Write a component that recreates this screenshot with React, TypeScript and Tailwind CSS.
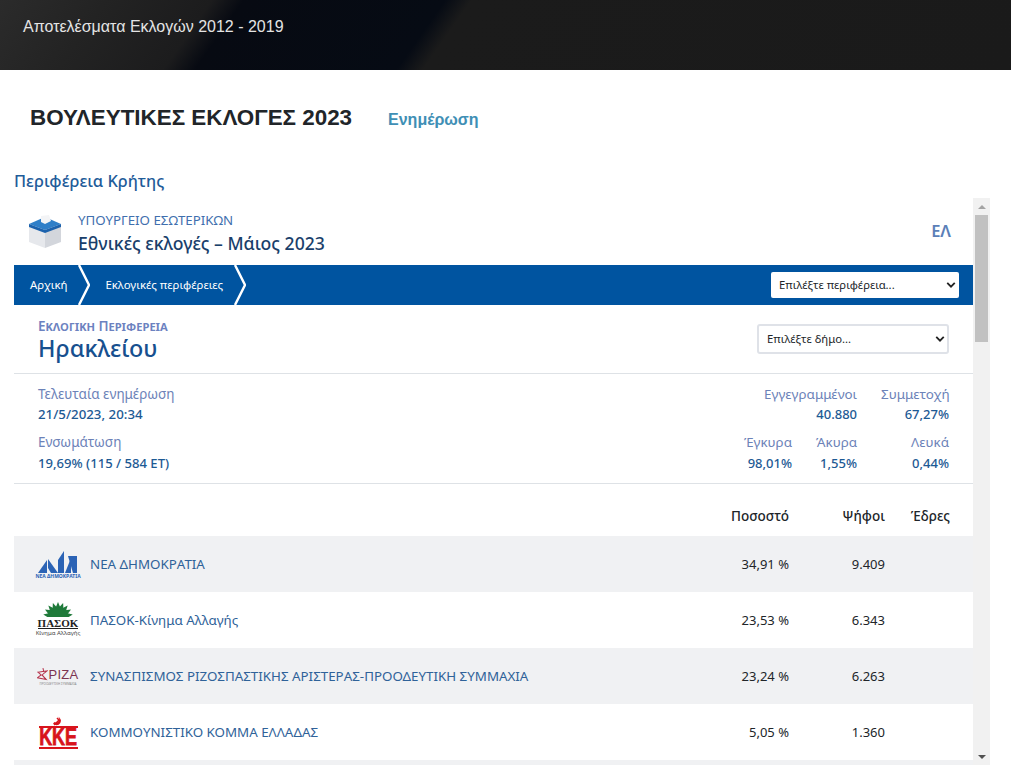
import React from 'react';

const font = "font-['Noto_Sans','Open_Sans',sans-serif]";

interface Party {
  name: string;
  percent: string;
  votes: string;
  logo: React.ReactNode;
}

const NdLogo = () => (
  <div className="flex w-[40px] flex-col items-center">
    <svg viewBox="0 0 40 23" className="h-[23px] w-[40px]">
      <path d="M0 23 L9 10 L9 23 Z" fill="#2b63b5" />
      <path d="M10 9 L20 23 L13 23 L10 18 Z" fill="#2b63b5" />
      <path d="M20 23 L20 10 L26 1 L26 23 Z" fill="#2b63b5" />
      <path d="M27 23 L33 8 L33 23 Z" fill="#2b63b5" />
      <path d="M30 6 L39 6 L39 23 L35 23 Z" fill="#2b63b5" />
    </svg>
    <span className="text-[5px] leading-[6px] font-bold whitespace-nowrap text-[#2b63b5]">ΝΕΑ ΔΗΜΟΚΡΑΤΙΑ</span>
  </div>
);

const sunRays = [-80, -60, -40, -20, 0, 20, 40, 60, 80];

const PasokLogo = () => (
  <div className="flex w-[40px] flex-col items-center">
    <svg viewBox="0 0 32 15" className="h-[15px] w-[32px]">
      <path d="M6 15 A10 10 0 0 1 26 15 Z" fill="#1f7a3a" />
      {sunRays.map((deg) => (
        <path key={deg} d="M13.5 6 L16 0 L18.5 6 Z" fill="#1f7a3a" transform={`rotate(${deg} 16 15)`} />
      ))}
    </svg>
    <span className="mt-[1px] border-b border-[#222] font-['Liberation_Serif',serif] text-[11px] leading-[10px] font-bold text-[#222]">
      ΠΑΣΟΚ
    </span>
    <span className="text-[6px] leading-[9px] whitespace-nowrap text-[#444]">Κίνημα Αλλαγής</span>
  </div>
);

const SyrizaLogo = () => (
  <div className="flex w-[40px] flex-col items-center">
    <div className="flex items-end">
      <svg viewBox="0 0 12 15" className="h-[15px] w-[11px]">
        <path d="M1 5 L11 3.5 L5.5 8 L10 13 L0.5 11 L4.5 8 Z" fill="none" stroke="#b5324a" strokeWidth="1.1" />
        <path d="M6.5 0.5 L7.5 5" stroke="#b5324a" strokeWidth="1.1" />
      </svg>
      <span className="font-['Liberation_Sans',sans-serif] text-[13px] leading-[14px] tracking-[0.3px] text-[#7c3350]">
        PIZA
      </span>
    </div>
    <span className="text-[3px] leading-[4px] whitespace-nowrap text-[#888]">ΠΡΟΟΔΕΥΤΙΚΗ ΣΥΜΜΑΧΙΑ</span>
  </div>
);

const KkeLogo = () => (
  <div className="flex w-[40px] flex-col items-center">
    <svg viewBox="0 0 14 10" className="h-[10px] w-[14px]">
      <path d="M6.5 0.5 A4.4 4.4 0 1 1 2 7.5 L3.6 6 A2.6 2.6 0 1 0 6.5 0.5 Z" fill="#d8141c" />
      <path d="M3 9 L8 4" stroke="#d8141c" strokeWidth="1.3" />
      <path d="M6 2 L9 5" stroke="#d8141c" strokeWidth="1.6" />
    </svg>
    <div className="flex h-[23px] w-[39px] items-center justify-center border-y-2 border-[#d8141c]">
      <span className="origin-center scale-y-[1.35] font-['Liberation_Sans',sans-serif] text-[18px] leading-[13px] font-bold tracking-[-0.2px] text-[#d8141c] [-webkit-text-stroke:0.6px_#d8141c]">
        KKE
      </span>
    </div>
  </div>
);

const parties: Party[] = [
  { name: 'ΝΕΑ ΔΗΜΟΚΡΑΤΙΑ', percent: '34,91 %', votes: '9.409', logo: <NdLogo /> },
  { name: 'ΠΑΣΟΚ-Κίνημα Αλλαγής', percent: '23,53 %', votes: '6.343', logo: <PasokLogo /> },
  {
    name: 'ΣΥΝΑΣΠΙΣΜΟΣ ΡΙΖΟΣΠΑΣΤΙΚΗΣ ΑΡΙΣΤΕΡΑΣ-ΠΡΟΟΔΕΥΤΙΚΗ ΣΥΜΜΑΧΙΑ',
    percent: '23,24 %',
    votes: '6.263',
    logo: <SyrizaLogo />,
  },
  { name: 'ΚΟΜΜΟΥΝΙΣΤΙΚΟ ΚΟΜΜΑ ΕΛΛΑΔΑΣ', percent: '5,05 %', votes: '1.360', logo: <KkeLogo /> },
];

const BallotBox = () => (
  <svg viewBox="0 0 34 34" className="h-[34px] w-[34px]">
    <path d="M1 9 L17 15 L17 33 L1 27 Z" fill="#e6e8ec" />
    <path d="M33 9 L17 15 L17 33 L33 27 Z" fill="#d3d6dc" />
    <path d="M1 9 L17 2 L33 9 L17 15 Z" fill="#2f7fc8" />
    <path d="M1 9 L17 15 L33 9 L33 12 L17 18 L1 12 Z" fill="#1c62ad" />
    <path d="M13 1 L21 0 L23 6 L17 9 L13 7 Z" fill="#f3f4f6" />
  </svg>
);

const Chevron = () => (
  <svg viewBox="0 0 12 40" className="h-[40px] w-[12px] shrink-0">
    <path d="M1 0 L11 20 L1 40" fill="none" stroke="#fff" strokeWidth="2.4" />
  </svg>
);

const SelectMock = ({ label, className }: { label: string; className: string }) => (
  <div className={`flex items-center justify-between bg-white text-[11.3px] text-[#212529] ${className}`}>
    <span>{label}</span>
    <svg viewBox="0 0 12 8" className="h-[8px] w-[10px]">
      <path d="M1.5 1.5 L6 6 L10.5 1.5" fill="none" stroke="#222" strokeWidth="2.2" />
    </svg>
  </div>
);

const Stat = ({ label, value, className = '' }: { label: string; value: string; className?: string }) => (
  <div className={`text-right ${className}`}>
    <div className="text-[13.4px] leading-[20px] text-[#6c82b8]">{label}</div>
    <div className="text-[13px] leading-[20px] font-medium text-[#1d5a94]">{value}</div>
  </div>
);

const Scrollbar = () => (
  <div className="flex w-[17px] shrink-0 flex-col items-center bg-[#f1f1f1]">
    <div className="flex h-[17px] items-center">
      <div className="h-0 w-0 border-x-[4px] border-b-[4px] border-x-transparent border-b-[#a3a3a3]" />
    </div>
    <div className="h-[127px] w-[13px] bg-[#c1c1c1]" />
    <div className="flex-1" />
    <div className="flex h-[17px] items-center">
      <div className="h-0 w-0 border-x-[4px] border-t-[4px] border-x-transparent border-t-[#505050]" />
    </div>
  </div>
);

export default function App() {
  return (
    <div className={`h-[781px] overflow-hidden bg-white ${font}`}>
      <header className="flex h-[70px] items-start bg-[linear-gradient(125deg,#2b2b2b_0%,#232323_10%,#1c1c1d_20%,#070a12_23%,#060b14_42%,#1b1b1b_44.5%,#1a1a1a_100%)] pt-[16px] pl-[23px]">
        <span className="font-['Liberation_Sans',sans-serif] text-[16px] leading-[22px] text-[#e4e4e4]">
          Αποτελέσματα Εκλογών 2012 - 2019
        </span>
      </header>

      <div className="flex h-[95px] items-center pl-[30px] font-['Liberation_Sans',sans-serif]">
        <h1 className="text-[22.4px] font-bold text-[#212529]">ΒΟΥΛΕΥΤΙΚΕΣ ΕΚΛΟΓΕΣ 2023</h1>
        <a className="ml-[36px] pt-[4px] text-[16px] font-bold text-[#3f8fb5]">Ενημέρωση</a>
      </div>

      <div className="flex h-[33px] items-start pt-[3px] pl-[14px] text-[16.4px] leading-[26px] font-medium text-[#1f5c99]">
        Περιφέρεια Κρήτης
      </div>

      <div className="mx-[14px] flex h-[567px] w-[976px] overflow-hidden">
        <main className="min-w-0 flex-1 overflow-hidden">
          <div className="flex h-[67px] items-center pr-[22px] pl-[14px]">
            <BallotBox />
            <div className="ml-[16px] flex-1 pt-[1px]">
              <div className="text-[13.3px] leading-[20px] text-[#3f6fae]">ΥΠΟΥΡΓΕΙΟ ΕΣΩΤΕΡΙΚΩΝ</div>
              <div className="mt-[1px] text-[17.6px] leading-[24px] font-medium text-[#1a3f6b]">
                Εθνικές εκλογές – Μάιος 2023
              </div>
            </div>
            <span className="text-[16.5px] font-semibold text-[#5b7fb8]">ΕΛ</span>
          </div>

          <nav className="flex h-[40px] items-center bg-[#0054a0] pr-[14px] text-[11.4px] text-white">
            <span className="pr-[11px] pl-[16px]">Αρχική</span>
            <Chevron />
            <span className="pr-[11px] pl-[15px]">Εκλογικές περιφέρειες</span>
            <Chevron />
            <SelectMock
              label="Επιλέξτε περιφέρεια..."
              className="ml-auto h-[26px] w-[188px] rounded-[2px] pr-[3px] pl-[8px]"
            />
          </nav>

          <section className="flex h-[69px] items-start justify-between border-b border-[#dee2e6] pt-[13px] pr-[24px] pl-[24px]">
            <div>
              <div className="text-[13.5px] leading-[16px] font-semibold text-[#6c82c0] [font-variant:small-caps]">
                Εκλογικη Περιφερεια
              </div>
              <div className="text-[23.4px] leading-[28px] font-medium text-[#17508f]">Ηρακλείου</div>
            </div>
            <SelectMock
              label="Επιλέξτε δήμο..."
              className="mt-[6px] h-[30px] w-[192px] rounded-[3px] border-2 border-[#dfe2e8] pr-[2px] pl-[8px]"
            />
          </section>

          <section className="flex h-[110px] justify-between border-b border-[#dee2e6] pt-[10px] pr-[24px] pl-[24px]">
            <div>
              <div className="text-[13.5px] leading-[20px] text-[#6c82b8]">Τελευταία ενημέρωση</div>
              <div className="text-[13.3px] leading-[20px] font-medium text-[#1d5a94]">21/5/2023, 20:34</div>
              <div className="mt-[8px] text-[13.5px] leading-[20px] text-[#6c82b8]">Ενσωμάτωση</div>
              <div className="mt-[1px] text-[13.1px] leading-[20px] font-medium text-[#1d5a94]">
                19,69% (115 / 584 ΕΤ)
              </div>
            </div>
            <div className="flex flex-col gap-[8px]">
              <div className="flex justify-end">
                <Stat label="Εγγεγραμμένοι" value="40.880" />
                <Stat label="Συμμετοχή" value="67,27%" className="ml-[24px] w-[68px]" />
              </div>
              <div className="flex justify-end">
                <Stat label="Έγκυρα" value="98,01%" className="[&>div:last-child]:mt-[1px]" />
                <Stat label="Άκυρα" value="1,55%" className="ml-[24px] w-[41px] [&>div:last-child]:mt-[1px]" />
                <Stat label="Λευκά" value="0,44%" className="ml-[24px] w-[68px] [&>div:last-child]:mt-[1px]" />
              </div>
            </div>
          </section>

          <div className="flex h-[52px] items-center pt-[13px] pr-[23px] text-[13.5px] font-medium text-[#212529]">
            <span className="ml-auto w-[70px] text-right">Ποσοστό</span>
            <span className="w-[96px] text-right">Ψήφοι</span>
            <span className="w-[65px] text-right">Έδρες</span>
          </div>

          {parties.map((party, i) => (
            <div
              key={party.name}
              className={`flex h-[56px] items-center pr-[88px] pl-[24px] text-[13.35px] ${i % 2 === 0 ? 'bg-[#f0f1f3]' : 'bg-white'}`}
            >
              <div className="flex w-[40px] shrink-0 justify-center">{party.logo}</div>
              <span className="ml-[12px] text-[#2f6299]">{party.name}</span>
              <span className="ml-auto pt-[1px] text-[13px] text-[#212529]">{party.percent}</span>
              <span className="w-[96px] pt-[1px] text-right text-[13px] text-[#212529]">{party.votes}</span>
            </div>
          ))}
          <div className="h-[56px] bg-[#f0f1f3]" />
        </main>
        <Scrollbar />
      </div>
    </div>
  );
}
